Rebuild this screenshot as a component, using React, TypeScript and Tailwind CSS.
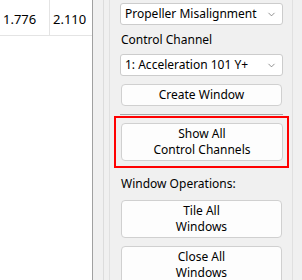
import { ChevronDown } from "lucide-react";

function Select({ value }: { value: string }) {
  return (
    <div className="flex h-[22px] items-center justify-between rounded-[3px] border border-[#cccccc] bg-white pl-[4px] pr-[5px]">
      <span>{value}</span>
      <ChevronDown size={11} strokeWidth={1.5} className="text-[#606060]" />
    </div>
  );
}

function Button({ children, tall }: { children: React.ReactNode; tall?: boolean }) {
  return (
    <button
      className={
        "flex w-full flex-col items-center justify-center rounded-[4px] border border-[#d0d0d0] bg-[#fdfdfd] leading-[16px] " +
        (tall ? "h-[38px]" : "h-[22px]")
      }
    >
      {children}
    </button>
  );
}

export default function App() {
  return (
    <div className="flex h-[280px] w-[302px] overflow-hidden bg-white text-[12px] text-black [font-family:'Noto_Sans',sans-serif]">
      {/* table area */}
      <div className="w-[93px] shrink-0 border-r border-[#a0a0a0]">
        <div className="flex h-[36px] border-b border-[#e4e4e4]">
          <div className="flex w-[50px] items-end border-r border-[#e4e4e4] pb-[6px] pl-[3px] text-[13px]">1.776</div>
          <div className="flex flex-1 items-end pb-[6px] pl-[3px] text-[13px]">2.110</div>
        </div>
      </div>

      {/* control panel */}
      <div className="flex-1 bg-[#f0f0f0] pl-[10px] pr-[9px]">
        <div className="h-full border-l border-[#dcdcdc] pl-[5px]">
          <div className="h-full border-x border-[#e0e0e0] pl-[10px] pr-[9px] pt-[3px]">
            <Select value="Propeller Misalignment" />
            <div className="flex h-[29px] items-center pl-[1px]">Control Channel</div>
            <Select value="1: Acceleration 101 Y+" />
            <div className="mt-[8px] px-[1px]">
              <Button>Create Window</Button>
            </div>
            <div className="mt-[8px] h-px bg-[#a8a8a8]" />
            <div className="-ml-[6px] -mr-[6px] mt-[1px] border-2 border-[#ff0000] px-[5px] py-[5px] pr-[4px]">
              <Button tall>
                <span>Show All</span>
                <span>Control Channels</span>
              </Button>
            </div>
            <div className="flex h-[32px] items-center pl-[1px]">Window Operations:</div>
            <div className="flex flex-col gap-[8px] px-[1px]">
              <Button tall>
                <span>Tile All</span>
                <span>Windows</span>
              </Button>
              <Button tall>
                <span>Close All</span>
                <span>Windows</span>
              </Button>
            </div>
          </div>
        </div>
      </div>
    </div>
  );
}
